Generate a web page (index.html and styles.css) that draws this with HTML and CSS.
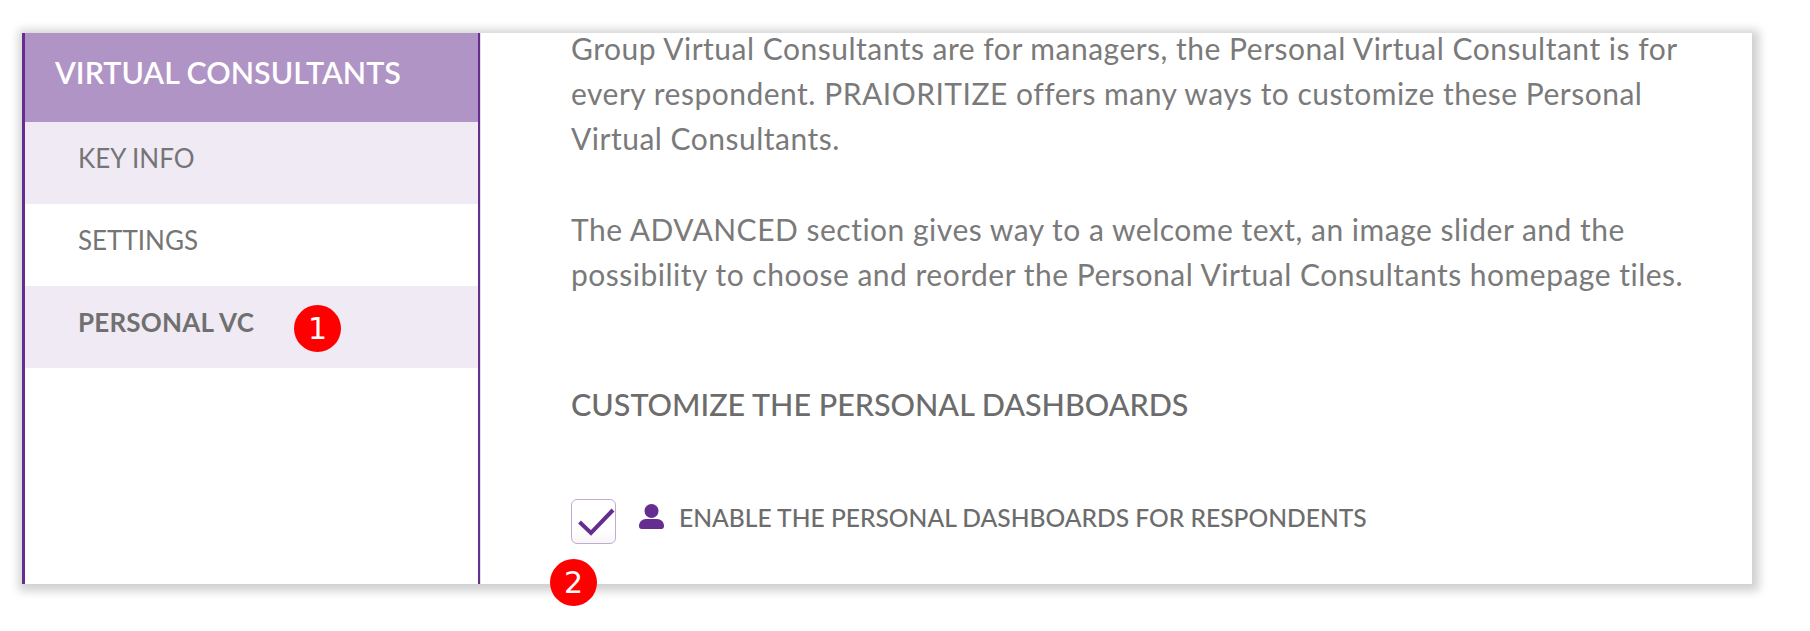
FILE: index.html
```html
<!DOCTYPE html>
<html lang="en">
<head>
  <title>Virtual Consultants</title>
  <link rel="stylesheet" href="styles.css">
</head>
<body>
  <div class="frame">
    <div class="sidebar">
      <div class="side-title">VIRTUAL CONSULTANTS</div>
      <div class="side-item shaded">KEY INFO</div>
      <div class="side-item">SETTINGS</div>
      <div class="side-item shaded active">PERSONAL VC</div>
    </div>
    <div class="content">
      <p class="para">Group Virtual Consultants are for managers, the Personal Virtual Consultant is for every respondent. PRAIORITIZE offers many ways to customize these Personal Virtual Consultants.</p>
      <p class="para">The ADVANCED section gives way to a welcome text, an image slider and the possibility to choose and reorder the Personal Virtual Consultants homepage tiles.</p>
      <h2 class="section-title">CUSTOMIZE THE PERSONAL DASHBOARDS</h2>
      <div class="option-row">
        <div class="checkbox">
          <svg width="43" height="43" viewBox="0 0 43 43"><path d="M7.500 22 L19 33 L41 10" fill="none" stroke="#652d90" stroke-width="4"/></svg>
        </div>
        <svg class="person" width="25" height="25" viewBox="0 0 25 25"><circle cx="12.500" cy="7" r="7" fill="#652d90"/><path d="M0 22 C0 18 3 15 7 15 L18 15 C22 15 25 18 25 22 C25 24 24 25 22.500 25 L2.500 25 C1 25 0 24 0 22 Z" fill="#652d90"/></svg>
        <span class="option-label">ENABLE THE PERSONAL DASHBOARDS FOR RESPONDENTS</span>
      </div>
    </div>
  </div>
  <div class="badge badge-one">1</div>
  <div class="badge badge-two">2</div>
</body>
</html>
```

FILE: styles.css
```css
html, body {
  margin: 0;
  height: 100%;
  background-color: #fff;
  overflow: hidden;
}
body {
  font-family: "Lato", sans-serif;
  color: #6c6c6c;
  padding: 33px 0 0 22px;
  box-sizing: border-box;
}
.frame {
  display: flex;
  width: 1730px;
  height: 551px;
  background-color: #fff;
  box-shadow: 2px 2px 9px 5px #d0d0d0;
}
.sidebar {
  width: 458px;
  box-sizing: border-box;
  border-left: 3.500px solid #652d90;
  border-right: 2px solid #652d90;
  flex-shrink: 0;
}
.side-title {
  height: 89px;
  box-sizing: border-box;
  padding: 19px 0 0 30px;
  background-color: #b094c5;
  color: #fff;
  font-size: 30.400px;
  font-weight: 600;
  line-height: 40px;
}
.side-item {
  height: 82px;
  box-sizing: border-box;
  padding: 18px 0 0 53px;
  font-size: 26px;
  line-height: 36px;
  color: #757575;
}
.shaded {
  background-color: #f0eaf5;
}
.active {
  font-weight: 700;
  letter-spacing: 0.2px;
  color: #707070;
}
.content {
  flex: 1;
  border-left: 1px solid #e6dcee;
  padding: 0 0 0 90px;
}
.para {
  margin: 0 0 46px;
  width: 1140px;
  font-size: 30px;
  letter-spacing: 0.5px;
  line-height: 45px;
  color: #7a7a7a;
}
.para:first-child {
  margin-top: -7px;
}
.section-title {
  margin: 87px 0 0;
  font-size: 30.500px;
  font-weight: 500;
  line-height: 40px;
}
.option-row {
  display: flex;
  align-items: center;
  margin-top: 75px;
}
.checkbox {
  width: 45px;
  height: 45px;
  box-sizing: border-box;
  border: 1px solid #c2a9d6;
  border-radius: 6px;
  background: linear-gradient(#fff 70%, #f6f6f6);
}
.checkbox svg {
  display: block;
}
.person {
  margin: 0 15px 0 23px;
  position: relative;
  top: -5px;
}
.option-label {
  font-size: 24.600px;
  font-weight: 500;
  position: relative;
  top: -4px;
}
.badge {
  position: absolute;
  width: 47px;
  height: 47px;
  border-radius: 50%;
  background-color: #ff0000;
  color: #fff;
  font-family: "DejaVu Sans", sans-serif;
  font-size: 30px;
  line-height: 47px;
  text-align: center;
}
.badge-one {
  left: 294px;
  top: 305px;
}
.badge-two {
  left: 550px;
  top: 559px;
}
```
